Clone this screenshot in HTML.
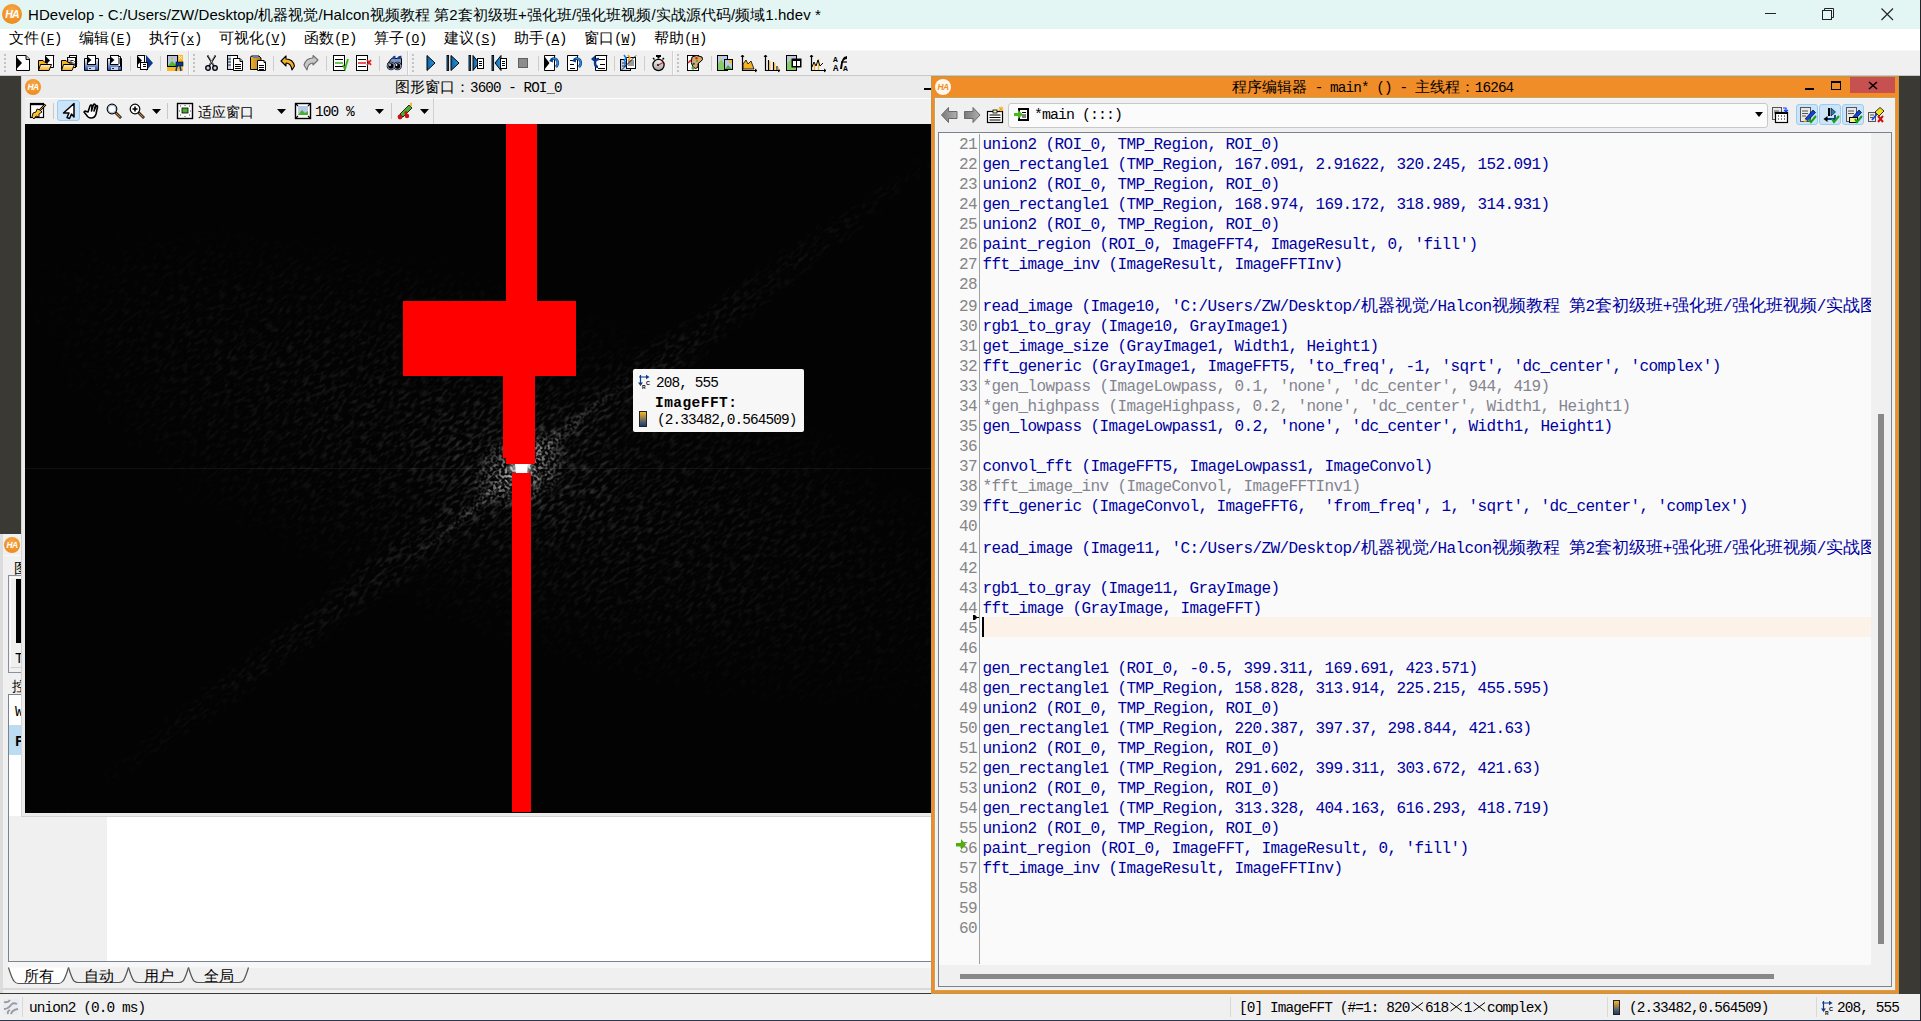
<!DOCTYPE html><html><head><meta charset="utf-8"><style>
*{box-sizing:border-box}
html,body{margin:0;padding:0}
body{width:1921px;height:1021px;overflow:hidden;background:#3a3934;position:relative;font-family:"Liberation Sans",sans-serif;color:#000}
.a{position:absolute}
.t{white-space:pre;line-height:1}
svg{position:absolute;overflow:visible}

.ln{left:940px;width:37px;text-align:right;font-family:"Liberation Mono",monospace;font-size:16px;letter-spacing:-0.6px;line-height:18px;color:#858585;white-space:pre}
.cd,.cm{left:982.5px;font-family:"Liberation Mono",monospace;font-size:16px;letter-spacing:-0.6px;line-height:18px;color:#0000a0;white-space:pre}
.cm{color:#84848f}
.cj{font-family:"Liberation Sans",sans-serif;font-size:16.75px;letter-spacing:0;line-height:1px}
</style></head><body><div class="a" style="left:0px;top:0px;width:1921px;height:29px;background:#e4f6f4"></div>
<svg style="left:2px;top:4px" width="20" height="20" viewBox="0 0 20 20"><defs><radialGradient id="hg1214" cx="50%" cy="35%" r="65%"><stop offset="0" stop-color="#f6a94a"/><stop offset="1" stop-color="#ee8a1c"/></radialGradient></defs><circle cx="10" cy="10" r="10" fill="url(#hg1214)"/><text x="10" y="13.6" text-anchor="middle" font-family="Liberation Sans" font-weight="bold" font-style="italic" font-size="10.5" fill="#fff" letter-spacing="-0.8">HA</text></svg>
<div class="a t" style="left:28px;top:7px;font-size:15px;color:#000;letter-spacing:0.06px">HDevelop - C:/Users/ZW/Desktop/机器视觉/Halcon视频教程 第2套初级班+强化班/强化班视频/实战源代码/频域1.hdev *</div>
<div class="a" style="left:1765px;top:13px;width:11px;height:1px;background:#222"></div>
<svg style="left:1822px;top:8px" width="13" height="13"><rect x="0.5" y="2.5" width="9" height="9" fill="none" stroke="#222"/><path d="M2.5 2.5 V0.5 H11.5 V9.5 H9.5" fill="none" stroke="#222"/></svg>
<svg style="left:1881px;top:8px" width="13" height="13"><path d="M0.5 0.5 L12 12 M12 0.5 L0.5 12" stroke="#222" stroke-width="1.1"/></svg>
<div class="a" style="left:0px;top:29px;width:1921px;height:21px;background:#fff"></div>
<div class="a t" style="left:9px;top:30px;"><span style="font-size:15px;font-family:'Liberation Sans',sans-serif">文件</span><span style="font-family:'Liberation Mono',monospace;font-size:13.95px;letter-spacing:-0.87px">(</span><span style="font-family:'Liberation Mono';font-size:13px;text-decoration:underline;letter-spacing:-0.3px">F</span><span style="font-family:'Liberation Mono',monospace;font-size:13.95px;letter-spacing:-0.87px">)</span></div>
<div class="a t" style="left:79px;top:30px;"><span style="font-size:15px;font-family:'Liberation Sans',sans-serif">编辑</span><span style="font-family:'Liberation Mono',monospace;font-size:13.95px;letter-spacing:-0.87px">(</span><span style="font-family:'Liberation Mono';font-size:13px;text-decoration:underline;letter-spacing:-0.3px">E</span><span style="font-family:'Liberation Mono',monospace;font-size:13.95px;letter-spacing:-0.87px">)</span></div>
<div class="a t" style="left:149px;top:30px;"><span style="font-size:15px;font-family:'Liberation Sans',sans-serif">执行</span><span style="font-family:'Liberation Mono',monospace;font-size:13.95px;letter-spacing:-0.87px">(</span><span style="font-family:'Liberation Mono';font-size:13px;text-decoration:underline;letter-spacing:-0.3px">x</span><span style="font-family:'Liberation Mono',monospace;font-size:13.95px;letter-spacing:-0.87px">)</span></div>
<div class="a t" style="left:219px;top:30px;"><span style="font-size:15px;font-family:'Liberation Sans',sans-serif">可视化</span><span style="font-family:'Liberation Mono',monospace;font-size:13.95px;letter-spacing:-0.87px">(</span><span style="font-family:'Liberation Mono';font-size:13px;text-decoration:underline;letter-spacing:-0.3px">V</span><span style="font-family:'Liberation Mono',monospace;font-size:13.95px;letter-spacing:-0.87px">)</span></div>
<div class="a t" style="left:304px;top:30px;"><span style="font-size:15px;font-family:'Liberation Sans',sans-serif">函数</span><span style="font-family:'Liberation Mono',monospace;font-size:13.95px;letter-spacing:-0.87px">(</span><span style="font-family:'Liberation Mono';font-size:13px;text-decoration:underline;letter-spacing:-0.3px">P</span><span style="font-family:'Liberation Mono',monospace;font-size:13.95px;letter-spacing:-0.87px">)</span></div>
<div class="a t" style="left:374px;top:30px;"><span style="font-size:15px;font-family:'Liberation Sans',sans-serif">算子</span><span style="font-family:'Liberation Mono',monospace;font-size:13.95px;letter-spacing:-0.87px">(</span><span style="font-family:'Liberation Mono';font-size:13px;text-decoration:underline;letter-spacing:-0.3px">O</span><span style="font-family:'Liberation Mono',monospace;font-size:13.95px;letter-spacing:-0.87px">)</span></div>
<div class="a t" style="left:444px;top:30px;"><span style="font-size:15px;font-family:'Liberation Sans',sans-serif">建议</span><span style="font-family:'Liberation Mono',monospace;font-size:13.95px;letter-spacing:-0.87px">(</span><span style="font-family:'Liberation Mono';font-size:13px;text-decoration:underline;letter-spacing:-0.3px">S</span><span style="font-family:'Liberation Mono',monospace;font-size:13.95px;letter-spacing:-0.87px">)</span></div>
<div class="a t" style="left:514px;top:30px;"><span style="font-size:15px;font-family:'Liberation Sans',sans-serif">助手</span><span style="font-family:'Liberation Mono',monospace;font-size:13.95px;letter-spacing:-0.87px">(</span><span style="font-family:'Liberation Mono';font-size:13px;text-decoration:underline;letter-spacing:-0.3px">A</span><span style="font-family:'Liberation Mono',monospace;font-size:13.95px;letter-spacing:-0.87px">)</span></div>
<div class="a t" style="left:584px;top:30px;"><span style="font-size:15px;font-family:'Liberation Sans',sans-serif">窗口</span><span style="font-family:'Liberation Mono',monospace;font-size:13.95px;letter-spacing:-0.87px">(</span><span style="font-family:'Liberation Mono';font-size:13px;text-decoration:underline;letter-spacing:-0.3px">W</span><span style="font-family:'Liberation Mono',monospace;font-size:13.95px;letter-spacing:-0.87px">)</span></div>
<div class="a t" style="left:654px;top:30px;"><span style="font-size:15px;font-family:'Liberation Sans',sans-serif">帮助</span><span style="font-family:'Liberation Mono',monospace;font-size:13.95px;letter-spacing:-0.87px">(</span><span style="font-family:'Liberation Mono';font-size:13px;text-decoration:underline;letter-spacing:-0.3px">H</span><span style="font-family:'Liberation Mono',monospace;font-size:13.95px;letter-spacing:-0.87px">)</span></div>
<div class="a" style="left:0px;top:50px;width:1921px;height:26px;background:#f0f0f0;border-top:1px solid #f8f8f8;border-bottom:1px solid #c8c8c8"></div>
<div class="a" style="left:4px;top:54px;width:2px;height:2px;background:#bdbdbd;border-radius:1px 0 1px 0"></div><div class="a" style="left:4px;top:58px;width:2px;height:2px;background:#bdbdbd;border-radius:1px 0 1px 0"></div><div class="a" style="left:4px;top:62px;width:2px;height:2px;background:#bdbdbd;border-radius:1px 0 1px 0"></div><div class="a" style="left:4px;top:66px;width:2px;height:2px;background:#bdbdbd;border-radius:1px 0 1px 0"></div><div class="a" style="left:4px;top:70px;width:2px;height:2px;background:#bdbdbd;border-radius:1px 0 1px 0"></div><div class="a" style="left:193px;top:54px;width:2px;height:2px;background:#bdbdbd;border-radius:1px 0 1px 0"></div><div class="a" style="left:193px;top:58px;width:2px;height:2px;background:#bdbdbd;border-radius:1px 0 1px 0"></div><div class="a" style="left:193px;top:62px;width:2px;height:2px;background:#bdbdbd;border-radius:1px 0 1px 0"></div><div class="a" style="left:193px;top:66px;width:2px;height:2px;background:#bdbdbd;border-radius:1px 0 1px 0"></div><div class="a" style="left:193px;top:70px;width:2px;height:2px;background:#bdbdbd;border-radius:1px 0 1px 0"></div><div class="a" style="left:412px;top:54px;width:2px;height:2px;background:#bdbdbd;border-radius:1px 0 1px 0"></div><div class="a" style="left:412px;top:58px;width:2px;height:2px;background:#bdbdbd;border-radius:1px 0 1px 0"></div><div class="a" style="left:412px;top:62px;width:2px;height:2px;background:#bdbdbd;border-radius:1px 0 1px 0"></div><div class="a" style="left:412px;top:66px;width:2px;height:2px;background:#bdbdbd;border-radius:1px 0 1px 0"></div><div class="a" style="left:412px;top:70px;width:2px;height:2px;background:#bdbdbd;border-radius:1px 0 1px 0"></div><div class="a" style="left:677px;top:54px;width:2px;height:2px;background:#bdbdbd;border-radius:1px 0 1px 0"></div><div class="a" style="left:677px;top:58px;width:2px;height:2px;background:#bdbdbd;border-radius:1px 0 1px 0"></div><div class="a" style="left:677px;top:62px;width:2px;height:2px;background:#bdbdbd;border-radius:1px 0 1px 0"></div><div class="a" style="left:677px;top:66px;width:2px;height:2px;background:#bdbdbd;border-radius:1px 0 1px 0"></div><div class="a" style="left:677px;top:70px;width:2px;height:2px;background:#bdbdbd;border-radius:1px 0 1px 0"></div><div class="a" style="left:188px;top:51px;width:1px;height:24px;background:#d0d0d0"></div><div class="a" style="left:189px;top:51px;width:1px;height:24px;background:#fafafa"></div><div class="a" style="left:407px;top:51px;width:1px;height:24px;background:#d0d0d0"></div><div class="a" style="left:408px;top:51px;width:1px;height:24px;background:#fafafa"></div><div class="a" style="left:672px;top:51px;width:1px;height:24px;background:#d0d0d0"></div><div class="a" style="left:673px;top:51px;width:1px;height:24px;background:#fafafa"></div><div class="a" style="left:130px;top:56px;width:1px;height:15px;background:#cdcdcd"></div><div class="a" style="left:160px;top:56px;width:1px;height:15px;background:#cdcdcd"></div><div class="a" style="left:273px;top:56px;width:1px;height:15px;background:#cdcdcd"></div><div class="a" style="left:326px;top:56px;width:1px;height:15px;background:#cdcdcd"></div><div class="a" style="left:379px;top:56px;width:1px;height:15px;background:#cdcdcd"></div><div class="a" style="left:538px;top:56px;width:1px;height:15px;background:#cdcdcd"></div><div class="a" style="left:614px;top:56px;width:1px;height:15px;background:#cdcdcd"></div><div class="a" style="left:644px;top:56px;width:1px;height:15px;background:#cdcdcd"></div><div class="a" style="left:711px;top:56px;width:1px;height:15px;background:#cdcdcd"></div><svg style="left:15px;top:55px" width="16" height="16" viewBox="0 0 16 16"><path d="M1.5 0.5 H11 L14.5 4 V15.5 H1.5Z" fill="#fff" stroke="#000" stroke-width="1"/><path d="M11 0.5 V4.5 H14.5" fill="#b9c9e6" stroke="#000" stroke-width="1"/><path d="M1.5 2 L7.0 8.0 L1.5 14Z" fill="#000"/></svg><svg style="left:38px;top:55px" width="16" height="16" viewBox="0 0 16 16"><path d="M7.5 0.5 H16 L15.5 0 V12.5 H7.5Z" fill="#fff" stroke="#000" stroke-width="1"/><path d="M16 0.5 V0.5 H15.5" fill="#b9c9e6" stroke="#000" stroke-width="1"/><path d="M8 1.5 L12 5.5 L8 9.5Z" fill="#000"/><defs><linearGradient id="g1" x1="0" y1="0" x2="0" y2="1"><stop offset="0" stop-color="#fff4c8"/><stop offset="1" stop-color="#f5aa18"/></linearGradient></defs><path d="M0.5 5.5 H5 L7 7.5 H9 V15.5 H0.5Z" fill="#f8b420" stroke="#000" stroke-width="1"/><path d="M2.5 9.5 H13.5 L11 15.5 H0.5 Z" fill="url(#g1)" stroke="#000" stroke-width="1"/></svg><svg style="left:61px;top:55px" width="16" height="16" viewBox="0 0 16 16"><rect x="8.5" y="0.5" width="7" height="11" fill="#fff" stroke="#000" stroke-width="1"/><rect x="6.5" y="2.5" width="8" height="10" fill="#fff" stroke="#000" stroke-width="1"/><rect x="7" y="4" width="1.5" height="6" fill="#aaa"/><text x="9" y="9" font-family="Liberation Sans" font-size="6" font-weight="bold">Ex</text><defs><linearGradient id="g2" x1="0" y1="0" x2="0" y2="1"><stop offset="0" stop-color="#fff4c8"/><stop offset="1" stop-color="#f5aa18"/></linearGradient></defs><path d="M0.5 5.5 H5 L7 7.5 H9 V15.5 H0.5Z" fill="#f8b420" stroke="#000" stroke-width="1"/><path d="M2.5 9.5 H13.5 L11 15.5 H0.5 Z" fill="url(#g2)" stroke="#000" stroke-width="1"/></svg><svg style="left:84px;top:55px" width="16" height="16" viewBox="0 0 16 16"><defs><linearGradient id="g3" x1="0" y1="0" x2="0" y2="1"><stop offset="0" stop-color="#ffffff"/><stop offset="1" stop-color="#1c4a9c"/></linearGradient></defs><path d="M.5 3.5 H14.5 V15.5 H.5Z" fill="url(#g3)" stroke="#000" stroke-width="1"/><rect x="3.5" y="0.5" width="8" height="9" fill="#fff" stroke="#000" stroke-width="1"/><path d="M4 2 L7.5 5.0 L4 8Z" fill="#000"/><rect x="4" y="12" width="7" height="3" fill="#c4d4ee"/><rect x="5" y="13" width="2" height="1" fill="#224"/></svg><svg style="left:107px;top:55px" width="16" height="16" viewBox="0 0 16 16"><defs><linearGradient id="g4" x1="0" y1="0" x2="0" y2="1"><stop offset="0" stop-color="#ffffff"/><stop offset="1" stop-color="#1c4a9c"/></linearGradient></defs><path d="M.5 3.5 H14.5 V15.5 H.5Z" fill="url(#g4)" stroke="#000" stroke-width="1"/><rect x="3.5" y="0.5" width="8" height="9" fill="#fff" stroke="#000" stroke-width="1"/><path d="M4 2 L7.5 5.0 L4 8Z" fill="#000"/><path d="M11.5 1.5 H13.5 V11.5 H11.5" fill="#fff" stroke="#000" stroke-width="1"/><path d="M12 4H13M12 6H13M12 8H13" stroke="#000"/><rect x="4" y="12" width="7" height="3" fill="#c4d4ee"/><rect x="5" y="13" width="2" height="1" fill="#224"/></svg><svg style="left:137px;top:55px" width="16" height="16" viewBox="0 0 16 16"><path d="M9 0 L16 8 L9 16Z" fill="#0b3a8c"/><path d="M0.5 0.5 H8 L7.5 0 V12.5 H0.5Z" fill="#fff" stroke="#000" stroke-width="1"/><path d="M8 0.5 V0.5 H7.5" fill="#b9c9e6" stroke="#000" stroke-width="1"/><path d="M0.5 1 L5.0 5.5 L0.5 10Z" fill="#000"/><rect x="3.5" y="7.5" width="7" height="7" fill="#fff" stroke="#000" stroke-width="1"/><path d="M6 9.5H9M6 11.5H9" stroke="#000"/></svg><svg style="left:167px;top:55px" width="16" height="16" viewBox="0 0 16 16"><rect x="0" y="0" width="16" height="16" fill="#fbb829"/><rect x="0.5" y="0.5" width="10" height="11" fill="#b4c4e0" stroke="#000" stroke-width="1"/><path d="M1 11 L5 6 L10 11Z" fill="#4cb82c"/><circle cx="5" cy="3.5" r="1" fill="#f8b000"/><rect x="9" y="7" width="7" height="4" fill="#0b3a8c" stroke="#000" stroke-width=".6"/><path d="M10 11 L9 16 M13 11 L14 16" stroke="#0b3a8c" stroke-width="1.5"/><path d="M12 1 L15 4 M15 1 L12 4" stroke="#fff" stroke-width=".8"/></svg><svg style="left:205px;top:55px" width="14" height="16" viewBox="0 0 14 16"><path d="M2.5 0.5 L9 11 M10.5 0.5 L4 11" stroke="#000" stroke-width="1.6" fill="none"/><path d="M3.5 1 L8.5 10 M9.5 1 L4.5 10" stroke="#fff" stroke-width=".5"/><circle cx="3" cy="13" r="2.3" fill="#9db3dc" stroke="#000" stroke-width="1.3"/><circle cx="10" cy="13" r="2.3" fill="#9db3dc" stroke="#000" stroke-width="1.3"/><circle cx="3" cy="13" r=".8" fill="#fff"/><circle cx="10" cy="13" r=".8" fill="#fff"/></svg><svg style="left:227px;top:55px" width="16" height="16" viewBox="0 0 16 16"><rect x=".5" y=".5" width="10" height="14" fill="#fff" stroke="#000" stroke-width="1"/><rect x="1" y="1" width="3" height="13" fill="#c4d6f2"/><path d="M1 4H4M1 7H4M1 10H4" stroke="#000" stroke-width=".8"/><path d="M6.5 3.5 H13 L15.5 6 V15.5 H6.5Z" fill="#fff" stroke="#000" stroke-width="1"/><path d="M13 3.5 V6.5 H15.5" fill="#b9c9e6" stroke="#000" stroke-width="1"/><path d="M8 9.5H14M8 11.5H14M8 13.5H14" stroke="#000"/></svg><svg style="left:250px;top:55px" width="16" height="16" viewBox="0 0 16 16"><defs><linearGradient id="g5" x1="0" y1="0" x2="1" y2="0"><stop offset="0" stop-color="#f6b02c"/><stop offset="1" stop-color="#a8782a"/></linearGradient></defs><path d="M.5 2.5 Q.5 1 2 1 H9 L11 3 V14.5 H.5Z" fill="url(#g5)" stroke="#000" stroke-width="1"/><rect x="3" y="1" width="5" height="2" fill="#5b80c0"/><path d="M7.5 5.5 H14 L15.5 7 V15.5 H7.5Z" fill="#fff" stroke="#000" stroke-width="1"/><path d="M14 5.5 V7.5 H15.5" fill="#b9c9e6" stroke="#000" stroke-width="1"/><path d="M9 10.5H14M9 12.5H14M9 14.5H14" stroke="#000"/></svg><svg style="left:280px;top:55px" width="16" height="16" viewBox="0 0 16 16"><path d="M1 6 L6 1 L6 4 Q13 4 14.5 11 L12 15 Q11 8 6 8 L6 11Z" fill="#f6b22a" stroke="#000" stroke-width="1.1" stroke-linejoin="round"/></svg><svg style="left:303px;top:55px" width="16" height="16" viewBox="0 0 16 16"><path d="M15 5 L10 0.5 L10 3 Q3 3 1 10 L4 15 Q5 8 10 8 L10 10Z" fill="#c8c8c8" stroke="#707070" stroke-width="1.1" stroke-linejoin="round"/></svg><svg style="left:333px;top:55px" width="16" height="16" viewBox="0 0 16 16"><rect x=".5" y=".5" width="11" height="15" fill="#fff" stroke="#000" stroke-width="1"/><path d="M2 4.5H10M2 11.5H10" stroke="#000"/><path d="M2 8H10" stroke="#3cb01c" stroke-width="1.5"/><path d="M10 10 L12 14 L15 4" stroke="#3cb01c" stroke-width="1.8" fill="none"/></svg><svg style="left:356px;top:55px" width="16" height="16" viewBox="0 0 16 16"><rect x=".5" y=".5" width="11" height="15" fill="#fff" stroke="#000" stroke-width="1"/><path d="M2 4.5H10M2 11.5H10" stroke="#000"/><path d="M2 8H10" stroke="#e02020" stroke-width="1.5"/><path d="M11 5 L15 10 M15 5 L11 10" stroke="#e02020" stroke-width="1.8"/></svg><svg style="left:386px;top:55px" width="16" height="16" viewBox="0 0 16 16"><path d="M1.5 9 L5.5 3.5 H15.5 V10" fill="#7f96c4" stroke="#000" stroke-width="1"/><path d="M6 4 Q6.5 0.5 9.5 0.8 V4Z M11 4 Q11.5 0.5 15.5 0.8 V4Z" fill="#1a3c8c"/><circle cx="5" cy="11" r="4.3" fill="#000"/><circle cx="11.5" cy="11" r="4.3" fill="#000"/><circle cx="5" cy="11" r="3.3" fill="none" stroke="#9cb2dc" stroke-width="0.9"/><circle cx="11.5" cy="11" r="3.3" fill="none" stroke="#9cb2dc" stroke-width="0.9"/><circle cx="4" cy="10" r="0.9" fill="#fff"/><circle cx="10.5" cy="10" r="0.9" fill="#fff"/></svg><svg style="left:426px;top:55px" width="16" height="16" viewBox="0 0 16 16"><defs><linearGradient id="g6" x1="0" y1="0" x2="1" y2="0"><stop offset="0" stop-color="#0b5ea8"/><stop offset="1" stop-color="#2ba0e0"/></linearGradient></defs><path d="M1 .5 L9 8 L1 15.5Z" fill="url(#g6)" stroke="#000" stroke-width="1" stroke-linejoin="miter"/></svg><svg style="left:446px;top:55px" width="16" height="16" viewBox="0 0 16 16"><defs><linearGradient id="g6" x1="0" y1="0" x2="1" y2="0"><stop offset="0" stop-color="#0b5ea8"/><stop offset="1" stop-color="#2ba0e0"/></linearGradient></defs><rect x="1" y="0.5" width="1.6" height="15" fill="#1a6cb8" stroke="#000" stroke-width=".9"/><path d="M5 .5 L13 8 L5 15.5Z" fill="url(#g6)" stroke="#000" stroke-width="1" stroke-linejoin="miter"/></svg><svg style="left:468px;top:55px" width="16" height="16" viewBox="0 0 16 16"><defs><linearGradient id="g6" x1="0" y1="0" x2="1" y2="0"><stop offset="0" stop-color="#0b5ea8"/><stop offset="1" stop-color="#2ba0e0"/></linearGradient></defs><rect x="1" y="0.5" width="1.6" height="15" fill="#1a6cb8" stroke="#000" stroke-width=".9"/><path d="M5 .5 L11 8 L5 15.5Z" fill="url(#g6)" stroke="#000" stroke-width="1" stroke-linejoin="miter"/><rect x="9.5" y="3.5" width="6" height="10" fill="#fff" stroke="#000" stroke-width="1"/><path d="M11 6.5H14M11 8.5H14M11 10.5H14" stroke="#000"/></svg><svg style="left:491px;top:55px" width="16" height="16" viewBox="0 0 16 16"><defs><linearGradient id="g6" x1="0" y1="0" x2="1" y2="0"><stop offset="0" stop-color="#0b5ea8"/><stop offset="1" stop-color="#2ba0e0"/></linearGradient></defs><rect x="1" y="0.5" width="1.6" height="15" fill="#1a6cb8" stroke="#000" stroke-width=".9"/><path d="M10 .5 L4 8 L10 15.5Z" fill="url(#g6)" stroke="#000" stroke-width="1" stroke-linejoin="miter"/><rect x="9.5" y="3.5" width="6" height="10" fill="#fff" stroke="#000" stroke-width="1"/><path d="M11 6.5H14M11 8.5H14M11 10.5H14" stroke="#000"/></svg><svg style="left:518px;top:58px" width="10" height="10" viewBox="0 0 10 10"><rect x=".5" y=".5" width="9" height="9" fill="#8c8c8c" stroke="#606060"/></svg><svg style="left:544px;top:55px" width="16" height="16" viewBox="0 0 16 16"><path d="M0.5 0.5 H11 L10.5 0 V15.5 H0.5Z" fill="#fff" stroke="#000" stroke-width="1"/><path d="M11 0.5 V0.5 H10.5" fill="#b9c9e6" stroke="#000" stroke-width="1"/><path d="M0.5 1.5 L5.5 8.0 L0.5 14.5Z" fill="#000"/><path d="M7 5 Q10 2 13 5 Q15 9 12 12" fill="none" stroke="#0b3a8c" stroke-width="2.6"/><path d="M7 5 Q10 2 13 5 Q15 9 12 12" fill="none" stroke="#2a8ad8" stroke-width="1.4"/><path d="M5 6 L8.5 2.5 L9 7.5Z" fill="#0b3a8c"/></svg><svg style="left:567px;top:55px" width="16" height="16" viewBox="0 0 16 16"><path d="M0.5 0.5 H11 L10.5 0 V15.5 H0.5Z" fill="#fff" stroke="#000" stroke-width="1"/><path d="M11 0.5 V0.5 H10.5" fill="#b9c9e6" stroke="#000" stroke-width="1"/><path d="M3 5.5H7M3 9.5H7M3 13.5H8" stroke="#000"/><path d="M7 5 Q10 2 13 5 Q15 9 12 12" fill="none" stroke="#0b3a8c" stroke-width="2.6"/><path d="M7 5 Q10 2 13 5 Q15 9 12 12" fill="none" stroke="#2a8ad8" stroke-width="1.4"/><path d="M5 6 L8.5 2.5 L9 7.5Z" fill="#0b3a8c"/></svg><svg style="left:591px;top:55px" width="16" height="16" viewBox="0 0 16 16"><path d="M4.5 0.5 H16 L15.5 0 V15.5 H4.5Z" fill="#fff" stroke="#000" stroke-width="1"/><path d="M16 0.5 V0.5 H15.5" fill="#b9c9e6" stroke="#000" stroke-width="1"/><path d="M7 4.5H14M9 9.5H14M7 13.5H14" stroke="#000"/><path d="M8 4 Q4 4 4 8 Q4 12 7 12" fill="none" stroke="#0b3a8c" stroke-width="2.4"/><path d="M0 4 L4 0.5 L4 7.5Z" fill="#0b3a8c"/></svg><svg style="left:620px;top:55px" width="16" height="16" viewBox="0 0 16 16"><rect x=".5" y="4.5" width="10" height="11" fill="#c4d4ee" stroke="#000" stroke-width="1"/><rect x="6.5" y="2.5" width="9" height="11" fill="#fff" stroke="#000" stroke-width="1"/><path d="M8 6H14M8 8H14M8 10H14M2 8H6M2 11H6" stroke="#000" stroke-width=".8"/><path d="M4 0 L6 3 L4 6 M5 6 V12" stroke="#1a7ee8" stroke-width="1.6" fill="none"/><path d="M8 0 L10 3 L8 6" stroke="#f39a1a" stroke-width="1.6" fill="none"/><path d="M0.5 16 L16 0.5" stroke="#222" stroke-width="1"/></svg><svg style="left:652px;top:55px" width="14" height="16" viewBox="0 0 14 16"><defs><linearGradient id="g7" x1="0" y1="0" x2="0" y2="1"><stop offset="0" stop-color="#f8f8f8"/><stop offset="1" stop-color="#a0a0a0"/></linearGradient></defs><rect x="4" y="0" width="5" height="2" fill="#000"/><rect x="5.5" y="1.5" width="2" height="2" fill="#000"/><path d="M1 3 L2.5 4.5 M12 3 L10.5 4.5" stroke="#000" stroke-width="1.4"/><circle cx="6.5" cy="10" r="5.6" fill="url(#g7)" stroke="#000" stroke-width="1.3"/><circle cx="6" cy="10" r="1" fill="#000"/><path d="M6.5 10 L11 7.5" stroke="#e02020" stroke-width="1.1"/></svg><svg style="left:687px;top:55px" width="16" height="16" viewBox="0 0 16 16"><rect x=".5" y=".5" width="11" height="15" fill="#fff" stroke="#000" stroke-width="1"/><path d="M1 8 L4 5" stroke="#e02020" stroke-width="1.6"/><path d="M5 2 Q9 -1 15 2 Q17 5 13 7 Q10 8 11 12 Q9 15 6 12 Q3 8 5 2Z" fill="#d8a868" stroke="#000" stroke-width="1"/><circle cx="9.5" cy="3.2" r="1.2" fill="#e02020"/><circle cx="10" cy="6" r="1.1" fill="#40b030"/><circle cx="6.8" cy="8.8" r="1.1" fill="#1a3ca8"/><path d="M4 13 L6 11 L8 13.5 L6 15Z" fill="#40b030"/></svg><svg style="left:717px;top:55px" width="16" height="16" viewBox="0 0 16 16"><rect x="0.5" y="0.5" width="10" height="15" fill="#b8c8e8" stroke="#000" stroke-width="1"/><path d="M1 15 L1 8.25 L4.5 4.5 L10 12.75 V15Z" fill="#86cc6a"/><rect x="7.5" y="4.5" width="8" height="10" fill="#b8c8e8" stroke="#000" stroke-width="1"/><path d="M8 14 L11 10 L15 14Z" fill="#48b030"/><rect x="12" y="5" width="3" height="3" fill="#f8b820"/><circle cx="4" cy="3" r="1" fill="#f8c840"/></svg><svg style="left:741px;top:55px" width="16" height="16" viewBox="0 0 16 16"><path d="M2 14 L2 9 L5 5 L7 9 L10 6 L13 14Z" fill="#f8b020" stroke="#000" stroke-width=".8"/><path d="M1.5 0 V15.5 H16" fill="none" stroke="#000" stroke-width="1.2"/><path d="M0 2 L1.5 0 L3 2 M14 14 L16 15.5 L14 17" fill="none" stroke="#000"/></svg><svg style="left:764px;top:55px" width="16" height="16" viewBox="0 0 16 16"><path d="M1.5 0 V15.5 H16" fill="none" stroke="#000" stroke-width="1.2"/><path d="M0 2 L1.5 0 L3 2 M14 14 L16 15.5 L14 17" fill="none" stroke="#000"/><path d="M4.5 5V15M9.5 7V15M13 11V15" stroke="#000" stroke-width="1.1"/><path d="M5.8 6V15M10.7 8V15M14.2 12V15" stroke="#f8b020" stroke-width="1.2"/></svg><svg style="left:786px;top:55px" width="16" height="16" viewBox="0 0 16 16"><rect x="0.5" y="0.5" width="10" height="15" fill="#b8c8e8" stroke="#000" stroke-width="1"/><path d="M1 15 L1 8.25 L4.5 4.5 L10 12.75 V15Z" fill="#86cc6a"/><rect x="5.5" y="3.5" width="10" height="9" fill="#000"/><rect x="7" y="6" width="3" height="5" fill="#fff"/><rect x="11" y="6" width="3" height="5" fill="#fff"/><circle cx="4" cy="3" r="1" fill="#f8c840"/></svg><svg style="left:810px;top:55px" width="16" height="16" viewBox="0 0 16 16"><path d="M1.5 0 V15.5 H16" fill="none" stroke="#000" stroke-width="1.2"/><path d="M0 2 L1.5 0 L3 2 M14 14 L16 15.5 L14 17" fill="none" stroke="#000"/><path d="M4.5 9V15M8.5 4V15" stroke="#f8b020" stroke-width="1.4"/><path d="M2 12 L4 7 L6 11 L8 5 L10 11 L13 8" fill="none" stroke="#000" stroke-width="1"/></svg><svg style="left:833px;top:55px" width="16" height="16" viewBox="0 0 16 16"><text x="0" y="7" font-family="Liberation Mono" font-weight="bold" font-size="8">A</text><text x="0" y="16" font-family="Liberation Mono" font-weight="bold" font-size="9">A</text><path d="M7 14 Q8 5 11 2 L14 1 V4 Q11 4 10 7 L9 14Z" fill="#000"/><path d="M8 7H14" stroke="#000" stroke-width="1.2"/><text x="10" y="16" font-family="Liberation Mono" font-weight="bold" font-size="8">A</text></svg>
<div class="a" style="left:0px;top:534px;width:931px;height:459px;background:#f0f0f0;border-left:3px solid #dcdcdc"></div>
<svg style="left:4px;top:537px" width="16" height="16" viewBox="0 0 20 20"><defs><radialGradient id="hg12545" cx="50%" cy="35%" r="65%"><stop offset="0" stop-color="#f6a94a"/><stop offset="1" stop-color="#ee8a1c"/></radialGradient></defs><circle cx="10" cy="10" r="10" fill="url(#hg12545)"/><text x="10" y="13.6" text-anchor="middle" font-family="Liberation Sans" font-weight="bold" font-style="italic" font-size="10.5" fill="#fff" letter-spacing="-0.8">HA</text></svg>
<div class="a" style="left:3px;top:555px;width:928px;height:435px;border-top:1px solid #fafafa;border-bottom:1px solid #d8d8d8"></div>
<div class="a t" style="left:14px;top:560px;"><span style="font-size:14px;font-family:'Liberation Sans',sans-serif">图</span></div>
<div class="a" style="left:8px;top:575px;width:20px;height:98px;border:1px solid #8a909a;border-right:none;background:#f0f0f0"></div>
<div class="a" style="left:10px;top:577px;width:18px;height:91px;border:1px solid #fcfcfc;border-right:none;border-bottom-color:#d0d0d0"></div>
<div class="a" style="left:16px;top:579px;width:10px;height:64px;background:#000"></div>
<div class="a t" style="left:15px;top:650px;"><span style="font-family:'Liberation Mono',monospace;font-size:13.95px;letter-spacing:-0.87px">T</span></div>
<div class="a t" style="left:12px;top:678px;"><span style="font-size:14px;font-family:'Liberation Sans',sans-serif">控</span></div>
<div class="a" style="left:8px;top:694px;width:923px;height:268px;background:#fff;border:1px solid #7a8390;border-right:none"></div>
<div class="a t" style="left:15px;top:703px;"><span style="font-family:'Liberation Mono',monospace;font-size:13.95px;letter-spacing:-0.87px">W</span></div>
<div class="a" style="left:9px;top:725px;width:20px;height:30px;background:#bcdcf4"></div>
<div class="a t" style="left:15px;top:733px;"><b><span style="font-family:'Liberation Mono',monospace;font-size:13.95px;letter-spacing:-0.87px">F</span></b></div>
<div class="a" style="left:9px;top:816px;width:98px;height:145px;background:#f0f0f0"></div>
<div class="a" style="left:21px;top:76px;width:910px;height:741px;background:#ebebeb;border-left:1px solid #d4d4d4;border-bottom:1px solid #d4d4d4"></div>
<div class="a" style="left:25px;top:98px;width:906px;height:26px;background:#f0f0f0;border-top:1px solid #fff"></div>
<div class="a" style="left:25px;top:124px;width:906px;height:689px;background:#030303"></div>
<svg style="left:25px;top:124px" width="906" height="689" viewBox="0 0 906 689">
<defs>
<filter id="nz" x="-50%" y="-50%" width="200%" height="200%" color-interpolation-filters="sRGB">
<feTurbulence type="fractalNoise" baseFrequency="0.12 0.3" numOctaves="2" seed="7" result="t"/>
<feColorMatrix in="t" type="matrix" values="0 0 0 0 1  0 0 0 0 1  0 0 0 0 1  3.2 0 0 0 -1.45"/>
</filter>
<filter id="nz2" x="-50%" y="-50%" width="200%" height="200%" color-interpolation-filters="sRGB">
<feTurbulence type="fractalNoise" baseFrequency="0.35" numOctaves="1" seed="3" result="t"/>
<feColorMatrix in="t" type="matrix" values="0 0 0 0 1  0 0 0 0 1  0 0 0 0 1  5 0 0 0 -2.3"/>
</filter>
<radialGradient id="rg1"><stop offset="0" stop-color="#fff" stop-opacity="0.8"/><stop offset="0.35" stop-color="#fff" stop-opacity="0.45"/><stop offset="1" stop-color="#fff" stop-opacity="0"/></radialGradient>
<radialGradient id="rg2"><stop offset="0" stop-color="#fff" stop-opacity="1"/><stop offset="0.3" stop-color="#fff" stop-opacity="0.6"/><stop offset="1" stop-color="#fff" stop-opacity="0"/></radialGradient>
<mask id="fm" maskUnits="userSpaceOnUse" x="0" y="0" width="906" height="689">
<rect width="906" height="689" fill="#000"/>
<ellipse cx="496" cy="344" rx="560" ry="190" transform="rotate(20 496 344)" fill="url(#rg1)" opacity="0.7"/>
<ellipse cx="496" cy="344" rx="600" ry="26" transform="rotate(-37 496 344)" fill="url(#rg2)" opacity="0.6"/>
<ellipse cx="496" cy="344" rx="110" ry="90" fill="url(#rg2)" opacity="0.9"/>
</mask>
<mask id="fm2" maskUnits="userSpaceOnUse" x="0" y="0" width="906" height="689">
<rect width="906" height="689" fill="#000"/>
<ellipse cx="496" cy="344" rx="55" ry="40" transform="rotate(-30 496 344)" fill="url(#rg2)"/>
<ellipse cx="496" cy="344" rx="150" ry="9" transform="rotate(-40 496 344)" fill="url(#rg2)" opacity="0.45"/>
</mask>
<radialGradient id="cs"><stop offset="0" stop-color="#fff"/><stop offset="0.45" stop-color="#fff" stop-opacity="0.9"/><stop offset="1" stop-color="#fff" stop-opacity="0"/></radialGradient>
</defs>
<g mask="url(#fm)"><rect x="-300" y="-300" width="1500" height="1300" filter="url(#nz)" opacity="0.26" transform="rotate(-40 496 344)"/></g>
<g mask="url(#fm2)"><rect width="906" height="689" filter="url(#nz2)" opacity="0.8"/></g>
<rect x="0" y="344" width="906" height="1" fill="#fff" opacity="0.06"/>
<ellipse cx="496" cy="344" rx="16" ry="10" fill="url(#cs)" opacity="0.5"/><path d="M490 340 H503 L502 349 H491Z" fill="#fff"/>
</svg>
<div class="a t" style="left:395px;top:79px;"><span style="font-size:15.3px;font-family:'Liberation Sans',sans-serif">图形窗口：</span><span style="font-family:'Liberation Mono',monospace;font-size:14.23px;letter-spacing:-0.89px">3600&nbsp;-&nbsp;ROI_0</span></div>
<div class="a" style="left:924px;top:88px;width:7px;height:2px;background:#000"></div>
<svg style="left:30px;top:103px" width="16" height="16" viewBox="0 0 16 16"><rect x=".5" y=".5" width="13" height="14" fill="#fff" stroke="#000" stroke-width="1.2"/><rect x="0" y="0" width="14" height="2.2" fill="#000"/><path d="M4 13 L15.5 1.5" stroke="#000" stroke-width="2.4"/><path d="M4 13 L15.5 1.5" stroke="#c8882a" stroke-width="1"/><path d="M2 14 L3 10 L6 9 L7 6 L10 7 L12 9 L9 11 L9 14 L6 13 L4 16Z" fill="#f8c030" stroke="#000" stroke-width="0.9" stroke-linejoin="round"/></svg><div class="a" style="left:53px;top:103px;width:1px;height:16px;background:#c8c8c8"></div><div class="a" style="left:57px;top:100px;width:23px;height:21px;background:#cce4f7;border:1px solid #99ccf3;border-radius:3px"></div><svg style="left:62px;top:103px" width="16" height="16" viewBox="0 0 16 16"><path d="M12 0.5 L12 14 L9.5 11 L7.5 15.5 L5 14.5 L7 10 L1.5 10Z" fill="#fff" stroke="#000" stroke-width="1.5" stroke-linejoin="round"/></svg><svg style="left:83px;top:103px" width="16" height="16" viewBox="0 0 16 16"><path d="M2 8 L5 9 L7 3 Q8 1 9 3 L8.5 8 L10.5 1.5 Q12 0.5 12.5 2.5 L11 8 L13 3 Q14.5 2 14.5 4 L13 11 Q12 15 8 15 Q5 15 3.5 12 L1 9Z" fill="#fff" stroke="#000" stroke-width="1.6" stroke-linejoin="round"/></svg><svg style="left:106px;top:103px" width="16" height="16" viewBox="0 0 16 16"><circle cx="6" cy="6" r="4.8" fill="#fff" stroke="#000" stroke-width="1.2"/><circle cx="6" cy="6" r="3.8" fill="none" stroke="#9fb6de" stroke-width="1"/><path d="M9.5 9.5 L15 15" stroke="#000" stroke-width="2.6"/><path d="M9.8 9.8 L14.5 14.5" stroke="#c8883a" stroke-width="1.2"/></svg><svg style="left:129px;top:103px" width="16" height="16" viewBox="0 0 16 16"><circle cx="6" cy="6" r="4.8" fill="#fff" stroke="#000" stroke-width="1.2"/><path d="M3.5 6H8.5M6 3.5V8.5" stroke="#000" stroke-width="1.6"/><path d="M9.5 9.5 L15 15" stroke="#000" stroke-width="2.6"/><path d="M9.8 9.8 L14.5 14.5" stroke="#c8883a" stroke-width="1.2"/></svg><svg style="left:152px;top:109px" width="9" height="5"><path d="M0 0H9L4.5 5Z" fill="#000"/></svg><svg style="left:277px;top:109px" width="9" height="5"><path d="M0 0H9L4.5 5Z" fill="#000"/></svg><svg style="left:375px;top:109px" width="9" height="5"><path d="M0 0H9L4.5 5Z" fill="#000"/></svg><svg style="left:420px;top:109px" width="9" height="5"><path d="M0 0H9L4.5 5Z" fill="#000"/></svg><div class="a" style="left:167px;top:103px;width:1px;height:16px;background:#c8c8c8"></div><div class="a" style="left:391px;top:103px;width:1px;height:16px;background:#c8c8c8"></div><div class="a" style="left:433px;top:98px;width:1px;height:26px;background:#d0d0d0"></div><svg style="left:177px;top:103px" width="16" height="16" viewBox="0 0 16 16"><rect x=".5" y=".5" width="15" height="15" fill="#fff" stroke="#000" stroke-width="1.4"/><rect x="5" y="5" width="6" height="5" fill="#48b030" stroke="#000" stroke-width=".8"/><path d="M3 3H4M12 3H13M3 12H4M12 12H13M8 2V3M8 13V14M2 8H3M13 8H14" stroke="#444"/></svg><svg style="left:295px;top:103px" width="16" height="16" viewBox="0 0 16 16"><rect x=".5" y=".5" width="15" height="15" fill="#fff" stroke="#000" stroke-width="1.4"/><rect x="3" y="3" width="10" height="9" fill="#b8c8e8"/><path d="M3 12 L7 7 L10 10 L13 8 V12Z" fill="#48b030"/><path d="M1 1 L3 3 M15 1 L13 3 M1 15 L3 13 M15 15 L13 13" stroke="#000" stroke-width="1.2"/></svg><svg style="left:397px;top:103px" width="16" height="16" viewBox="0 0 16 16"><path d="M3 11 L12 2 L15 5 L6 14Z" fill="#48b030" stroke="#000" stroke-width=".8"/><path d="M3 11 L6 14 L2 15Z" fill="#c8a060" stroke="#000" stroke-width=".6"/><circle cx="3" cy="14" r="2.4" fill="#d01010"/><circle cx="10" cy="13" r="2.2" fill="#d01010"/><circle cx="9" cy="9.5" r="1.5" fill="#d01010"/><path d="M13 0 L15 3 M15 0 L13 3 M14 -0.5V3.5" stroke="#f8b020" stroke-width=".9"/></svg>
<svg style="left:25px;top:79px" width="16" height="16" viewBox="0 0 20 20"><defs><radialGradient id="hg3387" cx="50%" cy="35%" r="65%"><stop offset="0" stop-color="#f6a94a"/><stop offset="1" stop-color="#ee8a1c"/></radialGradient></defs><circle cx="10" cy="10" r="10" fill="url(#hg3387)"/><text x="10" y="13.6" text-anchor="middle" font-family="Liberation Sans" font-weight="bold" font-style="italic" font-size="10.5" fill="#fff" letter-spacing="-0.8">HA</text></svg>
<div class="a t" style="left:198px;top:104px;"><span style="font-size:14px;font-family:'Liberation Sans',sans-serif">适应窗口</span></div>
<div class="a t" style="left:315px;top:103px;"><span style="font-family:'Liberation Mono',monospace;font-size:14.42px;letter-spacing:-0.90px">100&nbsp;%</span></div>
<div class="a" style="left:506px;top:124px;width:31px;height:177px;background:#ff0000"></div>
<div class="a" style="left:403px;top:301px;width:173px;height:75px;background:#ff0000"></div>
<div class="a" style="left:503px;top:376px;width:32px;height:82px;background:#ff0000"></div>
<div class="a" style="left:506px;top:458px;width:29px;height:6px;background:#ff0000"></div>
<div class="a" style="left:512px;top:473px;width:19px;height:339px;background:#ff0000"></div>
<div class="a" style="left:633px;top:369px;width:171px;height:63px;background:#f7f7f7;border-radius:2px"></div>
<div class="a t" style="left:656px;top:374px;"><span style="font-family:'Liberation Mono',monospace;font-size:14.42px;letter-spacing:-0.90px">208,&nbsp;555</span></div>
<div class="a t" style="left:655px;top:394px;"><b style="font-family:Liberation Mono;font-size:14.5px;letter-spacing:0.45px">ImageFFT:</b></div>
<div class="a t" style="left:657px;top:411px;"><span style="font-family:'Liberation Mono',monospace;font-size:14.42px;letter-spacing:-0.90px">(2.33482,0.564509)</span></div>
<div class="a" style="left:639px;top:411px;width:8px;height:16px;background:linear-gradient(#f6b52a,#123a80);border:1px solid #222"></div>
<div class="a" style="left:931px;top:76px;width:968px;height:918px;background:#f08d28;border:1px solid #bb9a50"></div>
<div class="a" style="left:934px;top:97px;width:962px;height:894px;border:1px solid #c9a352"></div>
<div class="a" style="left:935px;top:98px;width:960px;height:892px;background:#f0f0f0;border-left:1px solid #f4f5fa;border-top:1px solid #f4f5fa"></div>
<svg style="left:935px;top:79px" width="16" height="16" viewBox="0 0 20 20"><defs><radialGradient id="hg94387" cx="50%" cy="35%" r="65%"><stop offset="0" stop-color="#f6a94a"/><stop offset="1" stop-color="#ee8a1c"/></radialGradient></defs><circle cx="10" cy="10" r="10" fill="#fff8ee"/><text x="10" y="13.6" text-anchor="middle" font-family="Liberation Sans" font-weight="bold" font-style="italic" font-size="10.5" fill="#f08d28" letter-spacing="-0.8">HA</text></svg>
<div class="a t" style="left:1232px;top:79px;"><span style="font-size:15.4px;font-family:'Liberation Sans',sans-serif">程序编辑器</span><span style="font-family:'Liberation Mono',monospace;font-size:14.32px;letter-spacing:-0.89px">&nbsp;-&nbsp;main*&nbsp;()&nbsp;-&nbsp;</span><span style="font-size:15.4px;font-family:'Liberation Sans',sans-serif">主线程：</span><span style="font-family:'Liberation Mono',monospace;font-size:14.32px;letter-spacing:-0.89px">16264</span></div>
<div class="a" style="left:1850px;top:77px;width:45px;height:16px;background:#c75050"></div>
<div class="a" style="left:1805px;top:88px;width:9px;height:2px;background:#000"></div>
<div class="a" style="left:1831px;top:81px;width:10px;height:9px;border:2px solid #000;border-top-width:2px;border-width:2px 1px 1px 1px"></div>
<svg style="left:1868px;top:81px" width="10" height="9"><path d="M1 1 L9 8 M9 1 L1 8" stroke="#000" stroke-width="1.6"/></svg>
<div class="a" style="left:1008px;top:103px;width:760px;height:25px;background:#fbfbfb;border:1px solid #c8c8c8;border-radius:3px"></div>
<div class="a t" style="left:1034px;top:106px;"><span style="font-family:'Liberation Mono',monospace;font-size:14.88px;letter-spacing:-0.93px">*main&nbsp;(:::)</span></div>
<svg style="left:941px;top:107px" width="17" height="16" viewBox="0 0 17 16"><defs><linearGradient id="g8" x1="0" y1="0" x2="1" y2="0"><stop offset="0" stop-color="#7a7a7a"/><stop offset="1" stop-color="#b0b0b0"/></linearGradient></defs><path d="M.5 8 L7.5 .5 V4.5 H16 V11.5 H7.5 V15.5Z" fill="url(#g8)" stroke="#6a6a6a" stroke-width="1"/></svg><svg style="left:964px;top:107px" width="17" height="16" viewBox="0 0 17 16"><defs><linearGradient id="g9" x1="0" y1="0" x2="1" y2="0"><stop offset="0" stop-color="#7a7a7a"/><stop offset="1" stop-color="#b0b0b0"/></linearGradient></defs><path d="M16 8 L9 .5 V4.5 H.5 V11.5 H9 V15.5Z" fill="url(#g9)" stroke="#6a6a6a" stroke-width="1"/></svg><svg style="left:987px;top:107px" width="16" height="16" viewBox="0 0 16 16"><rect x=".5" y="4.5" width="15" height="11" fill="#fff" stroke="#000" stroke-width="1.2"/><rect x="6" y="3" width="4" height="3" fill="#f8f0a0" stroke="#000" stroke-width=".8"/><path d="M2.5 8H13.5M2.5 10.5H13.5M2.5 13H13.5" stroke="#000" stroke-width="1.1"/><path d="M12 0 L16 4 M16 0 L12 4 M14 -0.5V4.5 M11.5 2H16.5" stroke="#f8a000" stroke-width=".9"/></svg><svg style="left:1014px;top:108px" width="16" height="14" viewBox="0 0 16 14"><rect x="4" y="0" width="11" height="13" fill="#000"/><rect x="6" y="2" width="7" height="9" fill="#fff"/><path d="M8 4.5H12M8 7H12M8 9H12" stroke="#000"/><path d="M0 5H4V2 L9 6.5 L4 11 V8H0Z" fill="#48b81c"/></svg><svg style="left:1772px;top:107px" width="16" height="16" viewBox="0 0 16 16"><rect x=".5" y=".5" width="9" height="12" fill="#e8e8e8" stroke="#555"/><path d="M2 4H7M2 6H7" stroke="#555"/><rect x="3.5" y="5.5" width="12" height="10" fill="#fff" stroke="#000" stroke-width="1.2"/><rect x="3" y="5" width="13" height="2" fill="#000"/><path d="M6 9H7M9 9H10M12 9H13M6 12H7M9 12H10M12 12H13" stroke="#000" stroke-width="1.2"/><path d="M11 1 H14 V4 M12 3 L14 5 L16 3" stroke="#1040f0" stroke-width="1.2" fill="none"/></svg><div class="a" style="left:1796px;top:104px;width:22px;height:21px;background:#cce4f7;border:1px solid #99ccf3;border-radius:3px"></div><div class="a" style="left:1819px;top:104px;width:22px;height:21px;background:#cce4f7;border:1px solid #99ccf3;border-radius:3px"></div><div class="a" style="left:1842px;top:104px;width:22px;height:21px;background:#cce4f7;border:1px solid #99ccf3;border-radius:3px"></div><svg style="left:1800px;top:107px" width="16" height="16" viewBox="0 0 16 16"><rect x=".5" y=".5" width="10" height="14" fill="#e8e8e8" stroke="#555"/><path d="M2 4H8M2 6.5H8M2 9H6" stroke="#555"/><path d="M5 12 L13 3 L15.5 5.5 L7.5 14Z" fill="#1040e8" stroke="#000" stroke-width=".7"/><path d="M5 12 L7.5 14 L4 15Z" fill="#e8d040"/><path d="M9 12 L11 15 L16 9" fill="none" stroke="#18a018" stroke-width="2"/></svg><svg style="left:1823px;top:107px" width="16" height="16" viewBox="0 0 16 16"><rect x="5" y="1" width="2" height="8" fill="#000"/><path d="M8 1 L12.5 5 L8 9Z" fill="#1a7ec8" stroke="#000" stroke-width=".6"/><path d="M12 8 V12 H4" fill="none" stroke="#0b3a8c" stroke-width="1.8"/><path d="M0.5 12 L4.5 9 V15Z" fill="#000"/><path d="M9 12 L11 15 L16 9" fill="none" stroke="#18a018" stroke-width="2"/></svg><svg style="left:1846px;top:107px" width="16" height="16" viewBox="0 0 16 16"><rect x=".5" y=".5" width="10" height="14" fill="#e8e8e8" stroke="#555"/><path d="M2 4H8M2 6.5H8" stroke="#555"/><path d="M5 12 L13 3 L15.5 5.5 L7.5 14Z" fill="#1040e8" stroke="#000" stroke-width=".7"/><path d="M5 12 L7.5 14 L4 15Z" fill="#e8d040"/><rect x="3.5" y="10.5" width="8" height="5" fill="#f8f080" stroke="#000" stroke-width="1"/><path d="M9 12 L11 15 L16 9" fill="none" stroke="#18a018" stroke-width="2"/></svg><svg style="left:1868px;top:107px" width="16" height="16" viewBox="0 0 16 16"><rect x=".5" y="5.5" width="7" height="9" fill="#e8e8e8" stroke="#555"/><path d="M2 8H6M2 10.5H5" stroke="#555"/><path d="M4 13 L9 7" stroke="#1040e8" stroke-width="1.6"/><path d="M7 5 L12 0.5 L16 4 L11 9Z" fill="#f0e020" stroke="#000" stroke-width=".8"/><path d="M10 9 L15 15 M15 9 L10 15" stroke="#d01010" stroke-width="2"/></svg>
<svg style="left:1755px;top:112px" width="8" height="5"><path d="M0 0 H8 L4 5Z" fill="#000"/></svg>
<div class="a" style="left:938px;top:132px;width:954px;height:855px;background:#fafafa;border:1px solid #7a8390"></div>
<div class="a" style="left:979px;top:134px;width:1px;height:830px;background:#a0a0a0"></div>
<div class="a" style="left:1871px;top:133px;width:20px;height:832px;background:#f0f0f0"></div>
<div class="a" style="left:1878px;top:414px;width:6px;height:530px;background:#888"></div>
<div class="a" style="left:939px;top:965px;width:952px;height:21px;background:#f0f0f0"></div>
<div class="a" style="left:960px;top:974px;width:814px;height:5px;background:#888"></div>
<div class="a" style="left:984px;top:617px;width:887px;height:20px;background:#fdf2e8"></div>
<div class="a" style="left:982px;top:617px;width:2px;height:20px;background:#000"></div>
<div class="a" style="left:939px;top:133px;width:932px;height:832px;overflow:hidden"><div class="a" style="left:-939px;top:-133px;width:1921px;height:1021px"><div class="a ln" style="top:136px">21</div><div class="a cd" style="top:136px">union2 (ROI_0, TMP_Region, ROI_0)</div><div class="a ln" style="top:156px">22</div><div class="a cd" style="top:156px">gen_rectangle1 (TMP_Region, 167.091, 2.91622, 320.245, 152.091)</div><div class="a ln" style="top:176px">23</div><div class="a cd" style="top:176px">union2 (ROI_0, TMP_Region, ROI_0)</div><div class="a ln" style="top:196px">24</div><div class="a cd" style="top:196px">gen_rectangle1 (TMP_Region, 168.974, 169.172, 318.989, 314.931)</div><div class="a ln" style="top:216px">25</div><div class="a cd" style="top:216px">union2 (ROI_0, TMP_Region, ROI_0)</div><div class="a ln" style="top:236px">26</div><div class="a cd" style="top:236px">paint_region (ROI_0, ImageFFT4, ImageResult, 0, 'fill')</div><div class="a ln" style="top:256px">27</div><div class="a cd" style="top:256px">fft_image_inv (ImageResult, ImageFFTInv)</div><div class="a ln" style="top:276px">28</div><div class="a ln" style="top:298px">29</div><div class="a cd" style="top:298px">read_image (Image10, 'C:/Users/ZW/Desktop/<span class="cj">机器视觉</span>/Halcon<span class="cj">视频教程</span> <span class="cj">第</span>2<span class="cj">套初级班</span>+<span class="cj">强化班</span>/<span class="cj">强化班视频</span>/<span class="cj">实战图像</span>/</div><div class="a ln" style="top:318px">30</div><div class="a cd" style="top:318px">rgb1_to_gray (Image10, GrayImage1)</div><div class="a ln" style="top:338px">31</div><div class="a cd" style="top:338px">get_image_size (GrayImage1, Width1, Height1)</div><div class="a ln" style="top:358px">32</div><div class="a cd" style="top:358px">fft_generic (GrayImage1, ImageFFT5, 'to_freq', -1, 'sqrt', 'dc_center', 'complex')</div><div class="a ln" style="top:378px">33</div><div class="a cm" style="top:378px">*gen_lowpass (ImageLowpass, 0.1, 'none', 'dc_center', 944, 419)</div><div class="a ln" style="top:398px">34</div><div class="a cm" style="top:398px">*gen_highpass (ImageHighpass, 0.2, 'none', 'dc_center', Width1, Height1)</div><div class="a ln" style="top:418px">35</div><div class="a cd" style="top:418px">gen_lowpass (ImageLowpass1, 0.2, 'none', 'dc_center', Width1, Height1)</div><div class="a ln" style="top:438px">36</div><div class="a ln" style="top:458px">37</div><div class="a cd" style="top:458px">convol_fft (ImageFFT5, ImageLowpass1, ImageConvol)</div><div class="a ln" style="top:478px">38</div><div class="a cm" style="top:478px">*fft_image_inv (ImageConvol, ImageFFTInv1)</div><div class="a ln" style="top:498px">39</div><div class="a cd" style="top:498px">fft_generic (ImageConvol, ImageFFT6,  'from_freq', 1, 'sqrt', 'dc_center', 'complex')</div><div class="a ln" style="top:518px">40</div><div class="a ln" style="top:540px">41</div><div class="a cd" style="top:540px">read_image (Image11, 'C:/Users/ZW/Desktop/<span class="cj">机器视觉</span>/Halcon<span class="cj">视频教程</span> <span class="cj">第</span>2<span class="cj">套初级班</span>+<span class="cj">强化班</span>/<span class="cj">强化班视频</span>/<span class="cj">实战图像</span>/</div><div class="a ln" style="top:560px">42</div><div class="a ln" style="top:580px">43</div><div class="a cd" style="top:580px">rgb1_to_gray (Image11, GrayImage)</div><div class="a ln" style="top:600px">44</div><div class="a cd" style="top:600px">fft_image (GrayImage, ImageFFT)</div><div class="a ln" style="top:620px">45</div><div class="a ln" style="top:640px">46</div><div class="a ln" style="top:660px">47</div><div class="a cd" style="top:660px">gen_rectangle1 (ROI_0, -0.5, 399.311, 169.691, 423.571)</div><div class="a ln" style="top:680px">48</div><div class="a cd" style="top:680px">gen_rectangle1 (TMP_Region, 158.828, 313.914, 225.215, 455.595)</div><div class="a ln" style="top:700px">49</div><div class="a cd" style="top:700px">union2 (ROI_0, TMP_Region, ROI_0)</div><div class="a ln" style="top:720px">50</div><div class="a cd" style="top:720px">gen_rectangle1 (TMP_Region, 220.387, 397.37, 298.844, 421.63)</div><div class="a ln" style="top:740px">51</div><div class="a cd" style="top:740px">union2 (ROI_0, TMP_Region, ROI_0)</div><div class="a ln" style="top:760px">52</div><div class="a cd" style="top:760px">gen_rectangle1 (TMP_Region, 291.602, 399.311, 303.672, 421.63)</div><div class="a ln" style="top:780px">53</div><div class="a cd" style="top:780px">union2 (ROI_0, TMP_Region, ROI_0)</div><div class="a ln" style="top:800px">54</div><div class="a cd" style="top:800px">gen_rectangle1 (TMP_Region, 313.328, 404.163, 616.293, 418.719)</div><div class="a ln" style="top:820px">55</div><div class="a cd" style="top:820px">union2 (ROI_0, TMP_Region, ROI_0)</div><div class="a ln" style="top:840px">56</div><div class="a cd" style="top:840px">paint_region (ROI_0, ImageFFT, ImageResult, 0, 'fill')</div><div class="a ln" style="top:860px">57</div><div class="a cd" style="top:860px">fft_image_inv (ImageResult, ImageFFTInv)</div><div class="a ln" style="top:880px">58</div><div class="a ln" style="top:900px">59</div><div class="a ln" style="top:920px">60</div></div></div>
<svg style="left:955px;top:839px" width="12" height="12" viewBox="0 0 12 12"><path d="M1 4 H6 V0 L11 5.5 L6 11 V7.5 H1Z" fill="#4cb010"/></svg>
<svg style="left:972px;top:614px" width="8" height="7" viewBox="0 0 8 7"><path d="M1 1 H3 L5 3 H7 V4 H5 L3 6 H1Z" fill="#000"/></svg>
<svg style="left:638px;top:374px" width="13" height="16" viewBox="0 0 13 16"><path d="M2.5 1 V10 M1 3 H10" stroke="#0b3a8c" stroke-width="1.2"/><path d="M0 8.5 L2.5 12 L5 8.5Z M8 0.8 L11.5 3 L8 5.2Z" fill="#0b3a8c"/><text x="4" y="15" font-family="Liberation Sans" font-weight="bold" font-size="5">R</text><text x="8" y="10.5" font-family="Liberation Sans" font-weight="bold" font-size="5.5">C</text></svg>
<div class="a" style="left:0px;top:993px;width:931px;height:1px;background:#3a3934"></div>
<div class="a" style="left:0px;top:994px;width:1921px;height:26px;background:#f0f0f0"></div>
<div class="a" style="left:1920px;top:994px;width:1px;height:27px;background:#3a3934"></div>
<div class="a" style="left:0px;top:1020px;width:1921px;height:1px;background:#2a3a55"></div>
<div class="a" style="left:22px;top:997px;width:1px;height:20px;background:#d8d8d8"></div>
<div class="a t" style="left:29px;top:999px;"><span style="font-family:'Liberation Mono',monospace;font-size:14.42px;letter-spacing:-0.90px">union2&nbsp;(0.0&nbsp;ms)</span></div>
<div class="a" style="left:1230px;top:997px;width:1px;height:20px;background:#d8d8d8"></div>
<div class="a t" style="left:1239px;top:999px;"><span style="font-family:'Liberation Mono',monospace;font-size:14.42px;letter-spacing:-0.90px">[0]&nbsp;ImageFFT&nbsp;(#=1:&nbsp;820</span><span style="display:inline-block;width:15.5px;height:1px;position:relative"><svg style="left:1.5px;top:-9.3px" width="12.5" height="9.6"><path d="M0.5 0.5 L12.0 9.1 M12.0 0.5 L0.5 9.1" stroke="#000" stroke-width="1"/></svg></span><span style="font-family:'Liberation Mono',monospace;font-size:14.42px;letter-spacing:-0.90px">618</span><span style="display:inline-block;width:15.5px;height:1px;position:relative"><svg style="left:1.5px;top:-9.3px" width="12.5" height="9.6"><path d="M0.5 0.5 L12.0 9.1 M12.0 0.5 L0.5 9.1" stroke="#000" stroke-width="1"/></svg></span><span style="font-family:'Liberation Mono',monospace;font-size:14.42px;letter-spacing:-0.90px">1</span><span style="display:inline-block;width:15.5px;height:1px;position:relative"><svg style="left:1.5px;top:-9.3px" width="12.5" height="9.6"><path d="M0.5 0.5 L12.0 9.1 M12.0 0.5 L0.5 9.1" stroke="#000" stroke-width="1"/></svg></span><span style="font-family:'Liberation Mono',monospace;font-size:14.42px;letter-spacing:-0.90px">complex)</span></div>
<div class="a" style="left:1607px;top:997px;width:1px;height:20px;background:#d8d8d8"></div>
<div class="a" style="left:1613px;top:1000px;width:7px;height:15px;background:linear-gradient(#f6b52a,#123a80);border:1px solid #222"></div>
<div class="a t" style="left:1629px;top:999px;"><span style="font-family:'Liberation Mono',monospace;font-size:14.42px;letter-spacing:-0.90px">(2.33482,0.564509)</span></div>
<div class="a" style="left:1816px;top:997px;width:1px;height:20px;background:#d8d8d8"></div>
<div class="a t" style="left:1837px;top:999px;"><span style="font-family:'Liberation Mono',monospace;font-size:14.42px;letter-spacing:-0.90px">208,&nbsp;555</span></div>
<div class="a" style="left:8px;top:962px;width:923px;height:6px;background:#f7f7f7"></div>
<svg style="left:8px;top:967px" width="62" height="20"><path d="M0.5 0.5 Q4 12 6 14 Q8 16.5 10 16.5 H51 Q53 16.5 55 14 Q57 12 60.5 0.5" fill="#fff" stroke="#555" stroke-width="1.2"/></svg>
<div class="a t" style="left:24px;top:968px;"><span style="font-size:15px;font-family:'Liberation Sans',sans-serif">所有</span></div>
<svg style="left:68px;top:967px" width="62" height="20"><path d="M0.5 0.5 Q4 12 6 14 Q8 15.5 10 15.5 H51 Q53 15.5 55 14 Q57 12 60.5 0.5" fill="#f0f0f0" stroke="#555" stroke-width="1.2"/></svg>
<div class="a t" style="left:84px;top:968px;"><span style="font-size:15px;font-family:'Liberation Sans',sans-serif">自动</span></div>
<svg style="left:128px;top:967px" width="62" height="20"><path d="M0.5 0.5 Q4 12 6 14 Q8 15.5 10 15.5 H51 Q53 15.5 55 14 Q57 12 60.5 0.5" fill="#f0f0f0" stroke="#555" stroke-width="1.2"/></svg>
<div class="a t" style="left:144px;top:968px;"><span style="font-size:15px;font-family:'Liberation Sans',sans-serif">用户</span></div>
<svg style="left:188px;top:967px" width="62" height="20"><path d="M0.5 0.5 Q4 12 6 14 Q8 15.5 10 15.5 H51 Q53 15.5 55 14 Q57 12 60.5 0.5" fill="#f0f0f0" stroke="#555" stroke-width="1.2"/></svg>
<div class="a t" style="left:204px;top:968px;"><span style="font-size:15px;font-family:'Liberation Sans',sans-serif">全局</span></div>
<div class="a" style="left:3px;top:988px;width:928px;height:1px;background:#d8d8d8"></div>
<svg style="left:1821px;top:1000px" width="13" height="16" viewBox="0 0 13 16"><path d="M2.5 1 V10 M1 3 H10" stroke="#0b3a8c" stroke-width="1.2"/><path d="M0 8.5 L2.5 12 L5 8.5Z M8 0.8 L11.5 3 L8 5.2Z" fill="#0b3a8c"/><text x="4" y="15" font-family="Liberation Sans" font-weight="bold" font-size="5">R</text><text x="8" y="10.5" font-family="Liberation Sans" font-weight="bold" font-size="5.5">C</text></svg>
<svg style="left:3px;top:999px" width="16" height="16" viewBox="0 0 16 16"><rect x="0" y="0" width="16" height="16" fill="#e8ecf4"/><path d="M1 10 Q5 10 8 6 Q10 3 14 5 M1 3 Q5 4 7 1 M8 15 Q9 11 15 10 M5 15 Q4 12 7 11" stroke="#9a9a9a" stroke-width="1.8" fill="none"/></svg>
<div class="a" style="left:1920px;top:0px;width:1px;height:1021px;background:#26262a"></div></body></html>
